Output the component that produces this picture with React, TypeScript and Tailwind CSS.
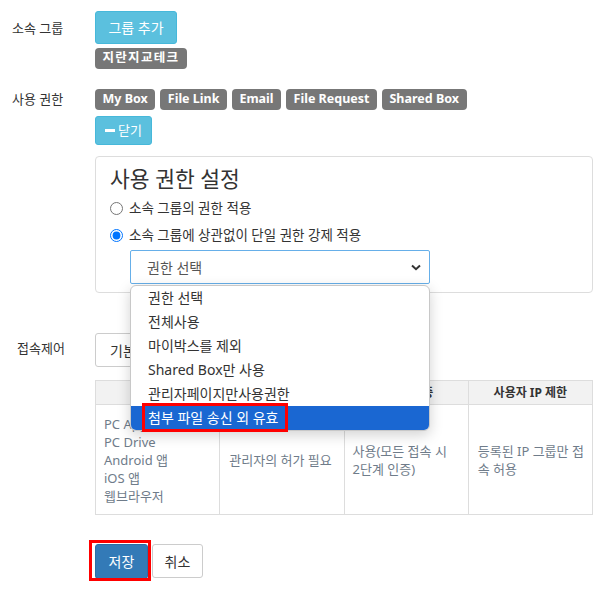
import React from "react";

const font = { fontFamily: '"Noto Sans", "Noto Sans CJK KR", sans-serif' };

function Badge({ children, wide }: { children: React.ReactNode; wide?: boolean }) {
  return (
    <span
      className={
        wide
          ? "inline-flex h-[21px] items-center rounded-[4px] bg-[#777777] px-[7.5px] text-[12.5px] font-bold tracking-[1.3px] text-white"
          : "inline-flex h-[21px] items-center rounded-[4px] bg-[#777777] px-[7.5px] text-[12.5px] font-bold text-white"
      }
    >
      {children}
    </span>
  );
}

export default function App() {
  return (
    <div className="relative h-[591px] w-[598px] bg-white text-[13px] text-[#333]" style={font}>
      <div className="flex flex-col pt-[11px]">
        {/* 소속 그룹 */}
        <div className="flex">
          <div className="w-[95px] pl-[12px] pt-[7px] leading-[20px]">소속 그룹</div>
          <div className="flex flex-col items-start gap-[4px]">
            <button className="h-[33px] w-[82px] rounded-[3px] border border-[#46b8da] bg-[#5bc0de] text-[14px] text-white">
              그룹 추가
            </button>
            <Badge wide>지란지교테크</Badge>
          </div>
        </div>

        {/* 사용 권한 */}
        <div className="mt-[20px] flex">
          <div className="w-[95px] pl-[12px] leading-[21px]">사용 권한</div>
          <div className="flex w-[498px] flex-col items-start">
            <div className="flex gap-[5px]">
              <Badge>My Box</Badge>
              <Badge>File Link</Badge>
              <Badge>Email</Badge>
              <Badge>File Request</Badge>
              <Badge>Shared Box</Badge>
            </div>
            <button className="mt-[6px] flex h-[29px] w-[57px] items-center justify-center gap-[3px] rounded-[3px] border border-[#46b8da] bg-[#5bc0de] text-[13px] text-white">
              <span className="inline-block h-[3px] w-[10px] bg-white" />
              닫기
            </button>
            <div className="mt-[11px] h-[137px] w-[498px] rounded-[4px] border border-[#dddddd] px-[14px] pt-[6px]">
              <div className="text-[21.5px] leading-[32px] text-[#333]">사용 권한 설정</div>
              <label className="mt-[3px] flex h-[20px] items-center gap-[6px] text-[13.5px]">
                <input type="radio" name="perm" className="m-0 h-[13px] w-[13px]" readOnly />
                <span>소속 그룹의 권한 적용</span>
              </label>
              <label className="mt-[7px] flex h-[20px] items-center gap-[6px] text-[13.5px]">
                <input type="radio" name="perm" className="m-0 h-[13px] w-[13px]" defaultChecked />
                <span>소속 그룹에 상관없이 단일 권한 강제 적용</span>
              </label>
              <div className="ml-[20px] mt-[5px] flex h-[34px] w-[300px] items-center justify-between rounded-[2px] border border-[#66afe9] pl-[16px] pr-[8px] text-[14px] text-[#555]">
                <span>권한 선택</span>
                <svg width="10" height="7" viewBox="0 0 10 7">
                  <path d="M1 1.5 L5 5.2 L9 1.5" stroke="#333" strokeWidth="2" fill="none" />
                </svg>
              </div>
            </div>
          </div>
        </div>

        {/* 접속제어 */}
        <div className="mt-[40px] flex">
          <div className="w-[95px] pl-[17px] pt-[5px] leading-[20px]">접속제어</div>
          <div className="flex w-[498px] flex-col items-start">
            <button className="h-[34px] w-[90px] rounded-[3px] border border-[#cccccc] bg-white pl-[14px] text-left text-[14px] text-[#333]">
              기본 설정
            </button>
            <table className="mt-[13px] w-[498px] table-fixed border-collapse text-[13px]">
              <thead>
                <tr className="h-[24px] bg-[#f2f2f2]">
                  <th className="border border-[#dddddd] text-[12px] font-bold">접속 환경</th>
                  <th className="border border-[#dddddd] text-[12px] font-bold">기기 승인</th>
                  <th className="border border-[#dddddd] text-[12px] font-bold">2단계 인증</th>
                  <th className="border border-[#dddddd] text-[12px] font-bold">사용자 IP 제한</th>
                </tr>
              </thead>
              <tbody>
                <tr className="h-[110px] text-[#6f7c8a]">
                  <td className="border border-[#dddddd] px-[8px] align-middle leading-[18px]">
                    PC App
                    <br />
                    PC Drive
                    <br />
                    Android 앱
                    <br />
                    iOS 앱
                    <br />
                    웹브라우저
                  </td>
                  <td className="whitespace-nowrap border border-[#dddddd] px-[9px] align-middle leading-[18px]">관리자의 허가 필요</td>
                  <td className="whitespace-nowrap border border-[#dddddd] px-[8px] align-middle leading-[18px]">
                    사용(모든 접속 시
                    <br />
                    2단계 인증)
                  </td>
                  <td className="whitespace-nowrap border border-[#dddddd] px-[9px] align-middle leading-[18px]">
                    등록된 IP 그룹만 접
                    <br />속 허용
                  </td>
                </tr>
              </tbody>
            </table>
            <div className="mt-[29px] flex gap-[4px]">
              <button className="h-[35px] w-[53px] rounded-[3px] border border-[#2e6da4] bg-[#337ab7] text-[14px] text-white">
                저장
              </button>
              <button className="h-[34px] w-[51px] rounded-[3px] border border-[#cccccc] bg-white text-[14px] text-[#333]">
                취소
              </button>
            </div>
          </div>
        </div>
      </div>

      {/* open select dropdown overlay */}
      <div className="absolute left-[130px] top-[285px] w-[300px] overflow-hidden rounded-[6px] border border-[#c8c8c8] bg-white text-[14px] text-[#333] shadow-[0_4px_14px_rgba(0,0,0,0.18)]">
        <div className="h-[24px] pl-[17px] leading-[24px]">권한 선택</div>
        <div className="h-[24px] pl-[17px] leading-[24px]">전체사용</div>
        <div className="h-[24px] pl-[17px] leading-[24px]">마이박스를 제외</div>
        <div className="h-[24px] pl-[17px] leading-[24px]">Shared Box만 사용</div>
        <div className="h-[24px] pl-[17px] leading-[24px]">관리자페이지만사용권한</div>
        <div className="h-[24px] bg-[#1a67d2] pl-[17px] leading-[24px] text-white">첨부 파일 송신 외 유효</div>
      </div>

      {/* red annotation boxes */}
      <div className="pointer-events-none absolute left-[142px] top-[403px] h-[29px] w-[146px] border-[3px] border-[#ff0000]" />
      <div className="pointer-events-none absolute left-[89px] top-[540px] h-[41px] w-[62px] border-[3px] border-[#ff0000]" />
    </div>
  );
}
